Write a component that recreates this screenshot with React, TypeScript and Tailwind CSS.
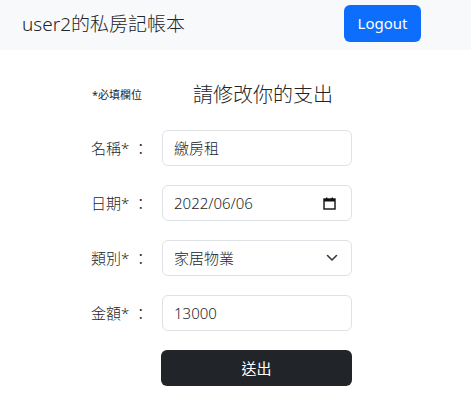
import React from "react";

const font = { fontFamily: '"Noto Sans", "Noto Sans CJK TC", sans-serif' };

function Row({ label, children }: { label: string; children: React.ReactNode }) {
  return (
    <div className="flex items-center h-[36px]">
      <div className="w-[72px] text-[15px] text-[#212529] font-light pl-[1px] whitespace-nowrap">{label}</div>
      <div className="w-[190px] h-[36px]">{children}</div>
    </div>
  );
}

const boxCls =
  "w-full h-full border border-[#dee2e6] rounded-[6px] bg-white flex items-center px-[11px] text-[15px] text-[#212529] font-light";

export default function App() {
  return (
    <div className="w-[471px] h-[414px] bg-white" style={font}>
      <nav className="h-[50px] bg-[#f8f9fa] flex items-center justify-between pl-[22px] pr-[50px]">
        <span className="text-[19px] text-[#212529] font-light leading-none -mt-[1px]">user2的私房記帳本</span>
        <button className="h-[37px] w-[77px] rounded-[6px] bg-[#0d6efd] text-white text-[15px] -mt-[4px]">
          Logout
        </button>
      </nav>
      <div className="pt-[30px] pl-[90px]">
        <div className="flex items-center h-[30px] mb-[20px]">
          <span className="w-[103px] text-[11px] text-[#212529] pl-[2px]">*必填欄位</span>
          <span className="text-[20px] text-[#212529] font-light leading-none">請修改你的支出</span>
        </div>
        <div className="flex flex-col gap-[19px]">
          <Row label="名稱* ：">
            <div className={boxCls}>繳房租</div>
          </Row>
          <Row label="日期* ：">
            <div className={boxCls + " justify-between"}>
              <span>2022/06/06</span>
              <svg width="13" height="13" viewBox="0 0 13 13" className="mr-[4px]">
                <rect x="1" y="2" width="11" height="10" fill="none" stroke="#111" strokeWidth="1.4" />
                <rect x="1" y="2" width="11" height="2.5" fill="#111" />
                <rect x="3" y="0.5" width="1.4" height="2" fill="#111" />
                <rect x="8.6" y="0.5" width="1.4" height="2" fill="#111" />
              </svg>
            </div>
          </Row>
          <Row label="類別* ：">
            <div className={boxCls + " justify-between"}>
              <span>家居物業</span>
              <svg width="12" height="8" viewBox="0 0 12 8" className="mr-[2px]">
                <path d="M1.5 1.5 L6 6 L10.5 1.5" fill="none" stroke="#343a40" strokeWidth="1.6" strokeLinecap="round" strokeLinejoin="round" />
              </svg>
            </div>
          </Row>
          <Row label="金額* ：">
            <div className={boxCls}>13000</div>
          </Row>
          <div className="flex h-[36px]">
            <div className="w-[71px]" />
            <button className="w-[191px] h-[36px] rounded-[6px] bg-[#212529] text-white text-[15px]">送出</button>
          </div>
        </div>
      </div>
    </div>
  );
}
